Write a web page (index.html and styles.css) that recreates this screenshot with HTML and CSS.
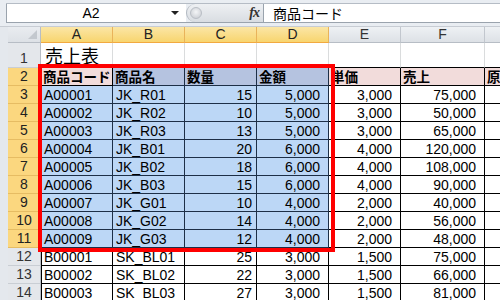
FILE: index.html
```html
<!DOCTYPE html>
<html lang="ja">
<head>
<meta charset="utf-8">
<title>売上表</title>
<link rel="stylesheet" href="styles.css">
</head>
<body>
<div class="app">
  <div class="fbar">
    <div class="fline">
      <div class="namebox"><span class="ref">A2</span><span class="arrow"></span></div>
      <div class="pill"><span class="knob"></span><span class="fx">fx</span></div>
      <div class="finput">商品コード</div>
    </div>
  </div>
  <div class="sheet">
    <div class="grid">
      <div class="corner"><span class="tri"></span></div>
      <div class="ch sel">A</div><div class="ch sel">B</div><div class="ch sel">C</div><div class="ch sel">D</div><div class="ch">E</div><div class="ch">F</div><div class="ch"></div>

      <div class="rh">1</div>
      <div class="c r1 title">売上表</div><div class="c r1"></div><div class="c r1"></div><div class="c r1"></div><div class="c r1"></div><div class="c r1"></div><div class="c r1"></div>

      <div class="rh sel">2</div>
      <div class="c t h first">商品コード</div><div class="c t h hs">商品名</div><div class="c t h hs">数量</div><div class="c t h hs">金額</div><div class="c t h">単価</div><div class="c t h">売上</div><div class="c t h">原</div>

      <div class="rh sel">3</div>
      <div class="c t s first">A00001</div><div class="c t s">JK_R01</div><div class="c t s n">15</div><div class="c t s n2">5,000</div><div class="c t n2">3,000</div><div class="c t n2">75,000</div><div class="c t"></div>
      <div class="rh sel">4</div>
      <div class="c t s first">A00002</div><div class="c t s">JK_R02</div><div class="c t s n">10</div><div class="c t s n2">5,000</div><div class="c t n2">3,000</div><div class="c t n2">50,000</div><div class="c t"></div>
      <div class="rh sel">5</div>
      <div class="c t s first">A00003</div><div class="c t s">JK_R03</div><div class="c t s n">13</div><div class="c t s n2">5,000</div><div class="c t n2">3,000</div><div class="c t n2">65,000</div><div class="c t"></div>
      <div class="rh sel">6</div>
      <div class="c t s first">A00004</div><div class="c t s">JK_B01</div><div class="c t s n">20</div><div class="c t s n2">6,000</div><div class="c t n2">4,000</div><div class="c t n2">120,000</div><div class="c t"></div>
      <div class="rh sel">7</div>
      <div class="c t s first">A00005</div><div class="c t s">JK_B02</div><div class="c t s n">18</div><div class="c t s n2">6,000</div><div class="c t n2">4,000</div><div class="c t n2">108,000</div><div class="c t"></div>
      <div class="rh sel">8</div>
      <div class="c t s first">A00006</div><div class="c t s">JK_B03</div><div class="c t s n">15</div><div class="c t s n2">6,000</div><div class="c t n2">4,000</div><div class="c t n2">90,000</div><div class="c t"></div>
      <div class="rh sel">9</div>
      <div class="c t s first">A00007</div><div class="c t s">JK_G01</div><div class="c t s n">10</div><div class="c t s n2">4,000</div><div class="c t n2">2,000</div><div class="c t n2">40,000</div><div class="c t"></div>
      <div class="rh sel">10</div>
      <div class="c t s first">A00008</div><div class="c t s">JK_G02</div><div class="c t s n">14</div><div class="c t s n2">4,000</div><div class="c t n2">2,000</div><div class="c t n2">56,000</div><div class="c t"></div>
      <div class="rh sel">11</div>
      <div class="c t s first">A00009</div><div class="c t s">JK_G03</div><div class="c t s n">12</div><div class="c t s n2">4,000</div><div class="c t n2">2,000</div><div class="c t n2">48,000</div><div class="c t"></div>

      <div class="rh">12</div>
      <div class="c t first">B00001</div><div class="c t">SK_BL01</div><div class="c t n">25</div><div class="c t n2">3,000</div><div class="c t n2">1,500</div><div class="c t n2">75,000</div><div class="c t"></div>
      <div class="rh">13</div>
      <div class="c t first">B00002</div><div class="c t">SK_BL02</div><div class="c t n">22</div><div class="c t n2">3,000</div><div class="c t n2">1,500</div><div class="c t n2">66,000</div><div class="c t"></div>
      <div class="rh">14</div>
      <div class="c t first">B00003</div><div class="c t">SK_BL03</div><div class="c t n">27</div><div class="c t n2">3,000</div><div class="c t n2">1,500</div><div class="c t n2">81,000</div><div class="c t"></div>
    </div>
    <div class="redbox"></div>
  </div>
</div>
</body>
</html>
```

FILE: styles.css
```css
* { box-sizing: border-box; }
html, body { margin: 0; padding: 0; }
body {
  width: 500px;
  height: 300px;
  overflow: hidden;
  background: #ffffff;
  font-family: "Liberation Sans", "Noto Sans CJK JP", sans-serif;
  font-size: 14px;
  color: #000;
}
.app { width: 500px; height: 300px; overflow: hidden; }

/* formula bar */
.fbar {
  height: 27px;
  background: #e9edf2;
  border-bottom: 1px solid #c7ccd3;
  padding-top: 3px;
  padding-left: 6px;
}
.fline {
  display: flex;
  height: 20px;
  border-top: 1px solid #b5bcc5;
  border-bottom: 1px solid #9aa3ad;
}
.namebox {
  width: 180px;
  background: #fff;
  border-left: 1px solid #9aa3ad;
  display: flex;
  align-items: center;
}
.ref {
  flex: 1;
  text-align: center;
  padding-left: 4px;
  font-size: 14px;
  line-height: 18px;
}
.arrow {
  width: 0; height: 0;
  border-left: 4px solid transparent;
  border-right: 4px solid transparent;
  border-top: 4px solid #222;
  margin-right: 7px;
}
.pill {
  width: 77px;
  background: linear-gradient(#eef0f3, #d9dde2);
  border-radius: 10px 0 0 10px;
  border-left: 1px solid #b3b9c1;
  display: flex;
  align-items: center;
  justify-content: space-between;
  padding: 0 4px 0 3px;
}
.knob {
  width: 12px; height: 12px;
  border-radius: 50%;
  background: radial-gradient(circle at 50% 40%, #f4f5f7, #c4c8ce);
  border: 1px solid #b9bec5;
}
.fx {
  font-family: "Liberation Serif", serif;
  font-style: italic;
  font-weight: bold;
  font-size: 14px;
  color: #333;
  letter-spacing: -1px;
}
.finput {
  flex: 1;
  background: #fff;
  border-left: 1px solid #9aa3ad;
  padding-left: 9px;
  line-height: 18px;
  font-family: "Noto Sans CJK JP", sans-serif;
  font-size: 14px;
}

/* sheet */
.sheet {
  position: relative;
  background: #e4e8ed;
  padding-left: 8px;
}
.grid {
  display: grid;
  grid-template-columns: 33px 72px 72px 72px 72px 72px 84px 16px;
  grid-template-rows: 16px 25px repeat(13, 18px);
  background: #fff;
}
.corner {
  background: linear-gradient(#e9ecf0, #dde1e6);
  border-right: 1px solid #b7bdc5;
  border-bottom: 1px solid #b7bdc5;
  position: relative;
}
.tri {
  position: absolute;
  right: 3px; bottom: 3px;
  width: 0; height: 0;
  border-left: 9px solid transparent;
  border-bottom: 9px solid #c3c8ce;
}
.ch {
  background: linear-gradient(#eef1f4, #dde1e6);
  border-right: 1px solid #c2c7ce;
  border-bottom: 1px solid #b7bdc5;
  text-align: center;
  line-height: 15px;
  font-size: 14px;
  color: #333;
}
.ch.sel {
  background: linear-gradient(#fbe6a6, #f8d56f);
  border-right: 1px solid #e9b35a;
  border-bottom: 1px solid #f2a940;
  color: #222;
}
.rh {
  background: #e4e7eb;
  border-right: 1px solid #b7bdc5;
  border-bottom: 1px solid #c9ced4;
  font-size: 14px;
  line-height: 17px;
  padding-top: 1px;
  color: #333;
  display: flex;
  align-items: flex-end;
  justify-content: center;
}
.rh.sel {
  background: #fbd77f;
  border-right: 1px solid #f2a940;
  border-bottom: 1px solid #e6bc63;
  color: #222;
}

.c {
  border-right: 1px solid #dadcdd;
  border-bottom: 1px solid #dadcdd;
  padding: 1px 3px 0 3px;
  line-height: 17px;
  white-space: nowrap;
  overflow: hidden;
}
.r1 { border-bottom-color: #000; }
.title {
  font-family: "Noto Sans CJK JP", sans-serif;
  font-size: 18px;
  line-height: 24px;
  padding: 0 0 0 4px;
  overflow: visible;
}
.t { border-right-color: #000; border-bottom-color: #000; }
.first { box-shadow: inset 1px 0 0 #000; }
.h {
  background: #f2dcdb;
  font-weight: bold;
  font-family: "Noto Sans CJK JP", sans-serif;
  font-size: 13.5px;
  line-height: 17px;
  padding: 0 0 0 2px;
  overflow: visible;
}
.s { background: #bcd7f6; border-right-color: #1d2f47; border-bottom-color: #1d2f47; }
.s.first { box-shadow: inset 1px 0 0 #1d2f47; }
.hs { background: #b5c3e0; border-right-color: #1d2f47; border-bottom-color: #1d2f47; }
.n { text-align: right; padding-right: 4px; }
.n2 { text-align: right; padding-right: 8px; }

.redbox {
  position: absolute;
  left: 38px;
  top: 37px;
  width: 297px;
  height: 188px;
  border: 4px solid #ff0000;
  pointer-events: none;
}
```
